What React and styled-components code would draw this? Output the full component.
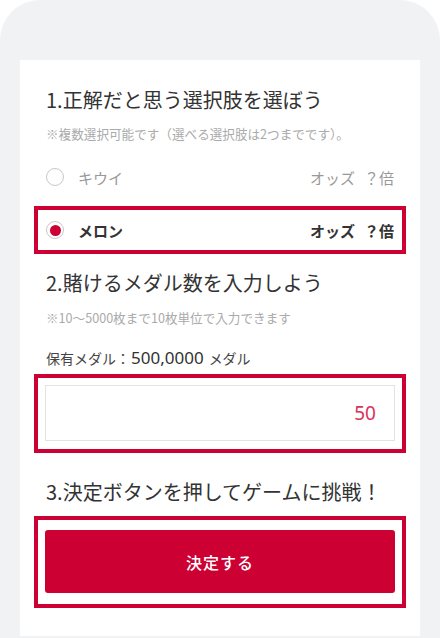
import React, { useState } from "react";
import styled, { createGlobalStyle } from "styled-components";

const GlobalStyle = createGlobalStyle`
  html, body {
    margin: 0;
    padding: 0;
    background: #fff;
  }
  body {
    font-family: "Noto Sans CJK JP", "Noto Sans", sans-serif;
    color: #333;
  }
`;

const Frame = styled.div`
  width: 440px;
  height: 638px;
  box-sizing: border-box;
  background: #f1f2f4;
  border-radius: 40px 40px 0 0;
  padding: 60px 20px 2px;
  overflow: hidden;
`;

const Card = styled.div`
  background: #fff;
  height: 576px;
  box-sizing: border-box;
  padding: 26px 26px 0;
  display: flex;
  flex-direction: column;
`;

const Heading = styled.h2`
  margin: ${(p) => p.mt || 0}px 0 0;
  font-size: 20px;
  line-height: 28px;
  font-weight: 400;
  color: #333;
`;

const Note = styled.p`
  margin: ${(p) => p.mt || 0}px 0 0;
  font-size: 12.6px;
  line-height: 18px;
  color: #aaa;
`;

const Highlight = styled.div`
  margin: ${(p) => p.mt || 0}px -12px 0;
  border: 4px solid #cc0033;
  padding: ${(p) => p.pad || "0 8px"};
`;

const OptionRow = styled.label`
  display: flex;
  align-items: center;
  height: 40px;
  margin-top: ${(p) => p.mt || 0}px;
  cursor: pointer;
  font-size: 15px;
  color: ${(p) => (p.checked ? "#333" : "#999")};
  font-weight: ${(p) => (p.checked ? 700 : 400)};
`;

const Radio = styled.span`
  width: 18px;
  height: 18px;
  box-sizing: border-box;
  border-radius: 50%;
  border: 1px solid #c8c8c8;
  display: flex;
  align-items: center;
  justify-content: center;
  margin-right: 14px;
  flex-shrink: 0;

  &::after {
    content: "";
    width: 11px;
    height: 11px;
    border-radius: 50%;
    background: ${(p) => (p.checked ? "#cc0033" : "transparent")};
  }
`;

const OptionName = styled.span`
  flex: 1;
`;

const Odds = styled.span`
  display: flex;
  gap: 9px;
`;

const MedalLabel = styled.div`
  margin-top: 20px;
  font-size: 14px;
  line-height: 22px;
  color: #444;
  display: flex;
  align-items: baseline;
`;

const MedalCount = styled.span`
  font-family: "Noto Sans", "Liberation Sans", sans-serif;
  font-size: 17px;
  margin: 0 5px 0 1px;
  color: #333;
`;

const AmountInput = styled.input`
  display: block;
  width: 100%;
  height: 56px;
  box-sizing: border-box;
  border: 1px solid #e3e3e3;
  border-radius: 0;
  padding: 0 18px;
  text-align: right;
  font-family: "Noto Sans", "Liberation Sans", sans-serif;
  font-size: 19px;
  color: #d9335a;
  outline: none;
`;

const SubmitButton = styled.button`
  display: block;
  width: 100%;
  height: 63px;
  border: none;
  border-radius: 3px;
  background: #cc0033;
  color: #fff;
  font-family: "Noto Sans CJK JP", sans-serif;
  font-size: 16px;
  font-weight: 500;
  letter-spacing: 1px;
  cursor: pointer;
`;

const options = [
  { id: "kiwi", name: "キウイ" },
  { id: "melon", name: "メロン" },
];

export default function App() {
  const [selected, setSelected] = useState("melon");
  const [amount, setAmount] = useState("50");

  const renderOption = (opt, mt) => {
    const checked = selected === opt.id;
    return (
      <OptionRow key={opt.id} checked={checked} mt={mt} onClick={() => setSelected(opt.id)}>
        <Radio checked={checked} />
        <OptionName>{opt.name}</OptionName>
        <Odds>
          <span>オッズ</span>
          <span>？倍</span>
        </Odds>
      </OptionRow>
    );
  };

  return (
    <>
      <GlobalStyle />
      <Frame>
        <Card>
          <Heading>1.正解だと思う選択肢を選ぼう</Heading>
          <Note mt={11}>※複数選択可能です（選べる選択肢は2つまでです）。</Note>
          {options.map((opt) =>
            selected === opt.id ? (
              <Highlight key={opt.id} mt={9}>
                {renderOption(opt)}
              </Highlight>
            ) : (
              renderOption(opt, 14)
            )
          )}

          <Heading mt={15}>2.賭けるメダル数を入力しよう</Heading>
          <Note mt={12}>※10〜5000枚まで10枚単位で入力できます</Note>
          <MedalLabel>
            保有メダル：<MedalCount>500,0000</MedalCount>メダル
          </MedalLabel>
          <Highlight mt={5} pad="7px 7px 8px">
            <AmountInput value={amount} onChange={(e) => setAmount(e.target.value)} />
          </Highlight>

          <Heading mt={25}>3.決定ボタンを押してゲームに挑戦！</Heading>
          <Highlight mt={10} pad="10px 7px 11px">
            <SubmitButton>決定する</SubmitButton>
          </Highlight>
        </Card>
      </Frame>
    </>
  );
}
